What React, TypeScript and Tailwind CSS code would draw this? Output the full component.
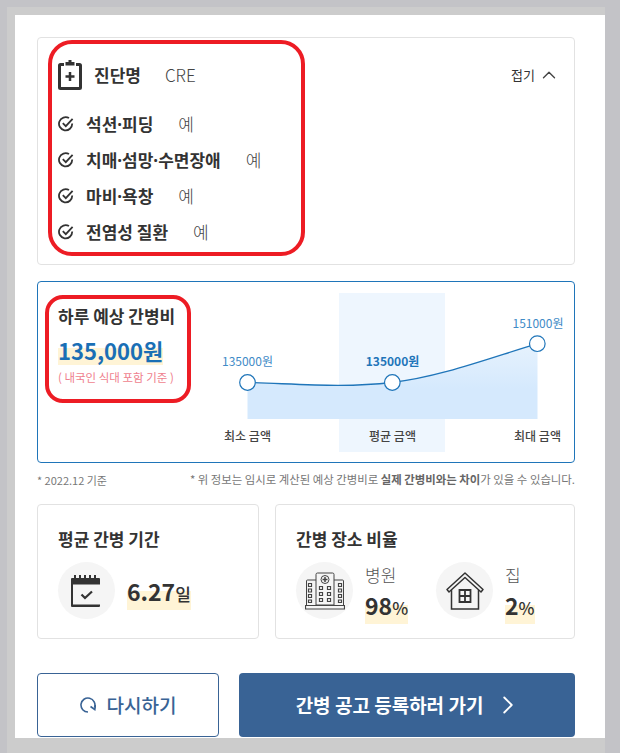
import { ChevronRight, ChevronUp } from "lucide-react";

const font = { fontFamily: '"Noto Sans CJK KR", "Noto Sans", sans-serif' };

const highlight = "bg-[linear-gradient(transparent_45%,#fff4d6_45%)]";

const ClipboardPlus = () => (
  <svg width="24" height="31" viewBox="0 0 24 31" fill="none">
    <path d="M6 5.500H2.500a1 1 0 0 0-1 1v22a1 1 0 0 0 1 1h19a1 1 0 0 0 1-1v-22a1 1 0 0 0-1-1H18" stroke="#333" strokeWidth="3" />
    <path d="M7.500 6.500V3h3V1h3v2h3v3.500z" fill="#333" />
    <path d="M12 13v9M7.500 17.500h9" stroke="#333" strokeWidth="2.500" />
  </svg>
);

const CheckCircle = () => (
  <svg width="16" height="16" viewBox="0 0 16 16" fill="none" stroke="#333" strokeWidth="1.800">
    <path d="M14.200 7.600A6.600 6.600 0 1 1 11 2.100" />
    <path d="M4.800 7.200l3 3L14.600 2.800" />
  </svg>
);

const CalendarCheck = () => (
  <svg width="32" height="32" viewBox="0 0 32 32">
    <path d="M0 3h3V0h2v3h3V0h2v3h3V0h2v3h3V0h2v3h3V0h2v3h3a1 1 0 0 1 1 1v27a1 1 0 0 1-1 1H1a1 1 0 0 1-1-1V4a1 1 0 0 1 1-1z" fill="#333" />
    <rect x="2" y="9.500" width="28" height="20" fill="#f5f5f5" />
    <path d="M10.500 19.500l3.500 3.500 7-6.500" fill="none" stroke="#333" strokeWidth="2.200" />
  </svg>
);

const Hospital = () => (
  <svg width="40" height="38" viewBox="0 0 40 38" fill="none" stroke="#444" strokeWidth="1">
    <path d="M11 2.500a1.500 1.500 0 0 1 1.500-1.500h15a1.500 1.500 0 0 1 1.500 1.500V33H11z" />
    <path d="M11 8H2.500a1 1 0 0 0-1 1v24M29 8h8.500a1 1 0 0 1 1 1v24" />
    <circle cx="20" cy="7.500" r="4" />
    <path d="M20 5v5M17.500 7.500h5" strokeWidth="1.500" />
    <path d="M14.500 14.500h3v3h-3zM22.500 14.500h3v3h-3zM14.500 20.500h3v3h-3zM22.500 20.500h3v3h-3zM14.500 26.500h3v3h-3zM22.500 26.500h3v3h-3z" strokeWidth="1.200" />
    <path d="M3.500 11.500h3v3h-3zM33.500 11.500h3v3h-3zM3.500 17h3v3h-3zM33.500 17h3v3h-3zM3.500 22.500h3v3h-3zM33.500 22.500h3v3h-3zM3.500 28h3v2.500h-3zM33.500 28h3v2.500h-3z" strokeWidth="1.200" />
    <path d="M.5 33.500h39v3.500H.5z" strokeWidth="1.200" />
  </svg>
);

const House = () => (
  <svg width="38" height="38" viewBox="0 0 38 38" fill="none" stroke="#333" strokeWidth="1.500">
    <path d="M1 17.500L19 1l18 16.500-2 2.500L19 5.500 3 20z" strokeLinejoin="round" />
    <path d="M5.500 18V37h27V18" />
    <path d="M13.500 18h11v12h-11zM19 18v12M13.500 24h11" strokeWidth="1.800" />
  </svg>
);

const Retry = () => (
  <svg width="16" height="16" viewBox="0 0 16 16" fill="none" stroke="#396395" strokeWidth="1.600">
    <path d="M8 15A7 7 0 1 1 14.500 10.500" />
    <path d="M10.500 9.500L14.800 12.500 15.500 8" />
  </svg>
);

const Chart = () => (
  <svg width="358" height="180" viewBox="216 282 358 180" className="shrink-0">
    <defs>
      <linearGradient id="area" x1="0" y1="0" x2="0" y2="1">
        <stop offset="0" stopColor="#e6f2fd" />
        <stop offset="0.6" stopColor="#d5e9fd" />
      </linearGradient>
    </defs>
    <rect x="339" y="293" width="106" height="159" fill="#eef6fe" />
    <path d="M247.500 382.500C300 384 345 388 392 382.500C440 377 490 358 537.500 343.700V419H247.500z" fill="url(#area)" />
    <path d="M247.500 382.500C300 384 345 388 392 382.500C440 377 490 358 537.500 343.700" fill="none" stroke="#1f75b9" strokeWidth="1.300" />
    <circle cx="247.500" cy="382.500" r="7.800" fill="#fff" stroke="#1f75b9" strokeWidth="1.200" />
    <circle cx="392.300" cy="382.500" r="7.800" fill="#fff" stroke="#1f75b9" strokeWidth="1.200" />
    <circle cx="537.300" cy="343.700" r="7.800" fill="#fff" stroke="#1f75b9" strokeWidth="1.200" />
    <g fontSize="12" textAnchor="middle" fill="#3f8bc7">
      <text x="247.500" y="366">135000원</text>
      <text x="392.500" y="366" fontWeight="700" fill="#1f75b9">135000원</text>
      <text x="538" y="328">151000원</text>
    </g>
    <g fontSize="12" fontWeight="500" textAnchor="middle" fill="#444">
      <text x="247.500" y="441">최소 금액</text>
      <text x="392.500" y="441">평균 금액</text>
      <text x="537.500" y="441">최대 금액</text>
    </g>
  </svg>
);

// 가운뎃점은 CJK 폰트에서 너무 넓어서 따로 묶는다
const Dotted = ({ text }: { text: string }) => (
  <>
    {text.split("·").map((part, i) => (
      <span key={part}>
        {i > 0 && <span className="font-['Noto_Sans']">·</span>}
        {part}
      </span>
    ))}
  </>
);

const conditions = ["석션·피딩", "치매·섬망·수면장애", "마비·욕창", "전염성 질환"];

const App = () => {
  return (
    <div style={font} className="w-[620px] h-[753px] overflow-hidden bg-[#c3c3c7] pl-[7px] pt-[7px] pr-[15px] text-[#333]">
      <div className="h-full bg-[#cccccc] pl-2 pt-2">
        <div className="relative h-[723px] overflow-hidden bg-white pl-[22px] pr-[30px] pt-[22px]">
          {/* 진단명 */}
          <section className="h-[228px] rounded-[4px] border border-[#e2e2e2] pl-5 pr-[14px] pt-[21px]">
            <div className="flex h-[31px] items-center">
              <ClipboardPlus />
              <strong className="ml-3 text-[17px] font-bold">진단명</strong>
              <span className="ml-6 text-[17px] font-light text-[#444]">CRE</span>
              <button className="ml-auto flex items-center gap-[3px] text-[13px]">
                접기
                <ChevronUp size={22} strokeWidth={1.5} color="#444" />
              </button>
            </div>
            <ul className="mt-4">
              {conditions.map((name) => (
                <li key={name} className="flex h-9 items-center">
                  <CheckCircle />
                  <span className="ml-3 text-[17px] font-bold">
                    <Dotted text={name} />
                  </span>
                  <span className="ml-[25px] text-[17px] font-light text-[#444]">예</span>
                </li>
              ))}
            </ul>
          </section>

          {/* 하루 예상 간병비 */}
          <section className="mt-4 flex h-[182px] justify-between rounded-[4px] border border-[#1f75b9]">
            <div className="pl-5 pt-6">
              <h2 className="text-[17px] font-bold leading-5">하루 예상 간병비</h2>
              <p className={`mt-[9px] w-fit text-[22px] font-bold leading-[30px] text-[#1a6fb5] ${highlight}`}>135,000원</p>
              <p className="mt-1 text-[11.5px] leading-4 text-[#ef7f8e]">( 내국인 식대 포함 기준 )</p>
            </div>
            <Chart />
          </section>

          <div className="mt-[9px] flex h-4 items-center justify-between text-[#777]">
            <span className="text-[11px]">* 2022.12 기준</span>
            <span className="text-[11.4px]">
              * 위 정보는 임시로 계산된 예상 간병비로 <b className="font-bold text-[#666]">실제 간병비와는 차이</b>가 있을 수 있습니다.
            </span>
          </div>

          <div className="mt-4 flex gap-4">
            <section className="h-[135px] w-[222px] rounded-[4px] border border-[#e2e2e2] pl-5 pt-[22px]">
              <h3 className="text-[17px] font-bold leading-6">평균 간병 기간</h3>
              <div className="mt-[11px] flex items-center">
                <div className="flex size-[57px] items-center justify-center rounded-full bg-[#f5f5f5]">
                  <CalendarCheck />
                </div>
                <p className={`ml-3 mt-1 text-[23px] font-bold leading-8 ${highlight}`}>
                  6.27<span className="text-[17px] font-medium">일</span>
                </p>
              </div>
            </section>
            <section className="h-[135px] flex-1 rounded-[4px] border border-[#e2e2e2] pl-5 pt-[22px]">
              <h3 className="text-[17px] font-bold leading-6">간병 장소 비율</h3>
              <div className="mt-[11px] flex">
                <div className="flex size-[57px] items-center justify-center rounded-full bg-[#f5f5f5]">
                  <Hospital />
                </div>
                <div className="ml-3 w-[71px]">
                  <p className="text-[17px] font-light leading-[26px] text-[#555]">병원</p>
                  <p className={`mt-px w-fit text-[23px] font-bold leading-8 ${highlight}`}>
                    98<span className="text-[17px] font-medium">%</span>
                  </p>
                </div>
                <div className="flex size-[57px] items-center justify-center rounded-full bg-[#f5f5f5]">
                  <House />
                </div>
                <div className="ml-3">
                  <p className="text-[17px] font-light leading-[26px] text-[#555]">집</p>
                  <p className={`mt-px w-fit text-[23px] font-bold leading-8 ${highlight}`}>
                    2<span className="text-[17px] font-medium">%</span>
                  </p>
                </div>
              </div>
            </section>
          </div>

          <div className="mt-[34px] flex gap-5">
            <button className="flex h-16 w-[182px] items-center justify-center gap-[11px] rounded-[4px] border border-[#396395] text-[19px] font-medium text-[#396395]">
              <Retry />
              다시하기
            </button>
            <button className="flex h-16 flex-1 items-center justify-center gap-[10px] rounded-[4px] bg-[#396395] pl-[5px] text-[19px] font-bold text-white">
              간병 공고 등록하러 가기
              <ChevronRight size={30} strokeWidth={1.5} />
            </button>
          </div>

          {/* 빨간 표시 */}
          <div className="absolute left-[33px] top-[25px] h-[216px] w-[257px] rounded-[24px] border-4 border-[#ed1c24]" />
          <div className="absolute left-[30px] top-[280px] h-[108px] w-[146px] rounded-[18px] border-4 border-[#ed1c24]" />
        </div>
      </div>
    </div>
  );
};

export default App;
